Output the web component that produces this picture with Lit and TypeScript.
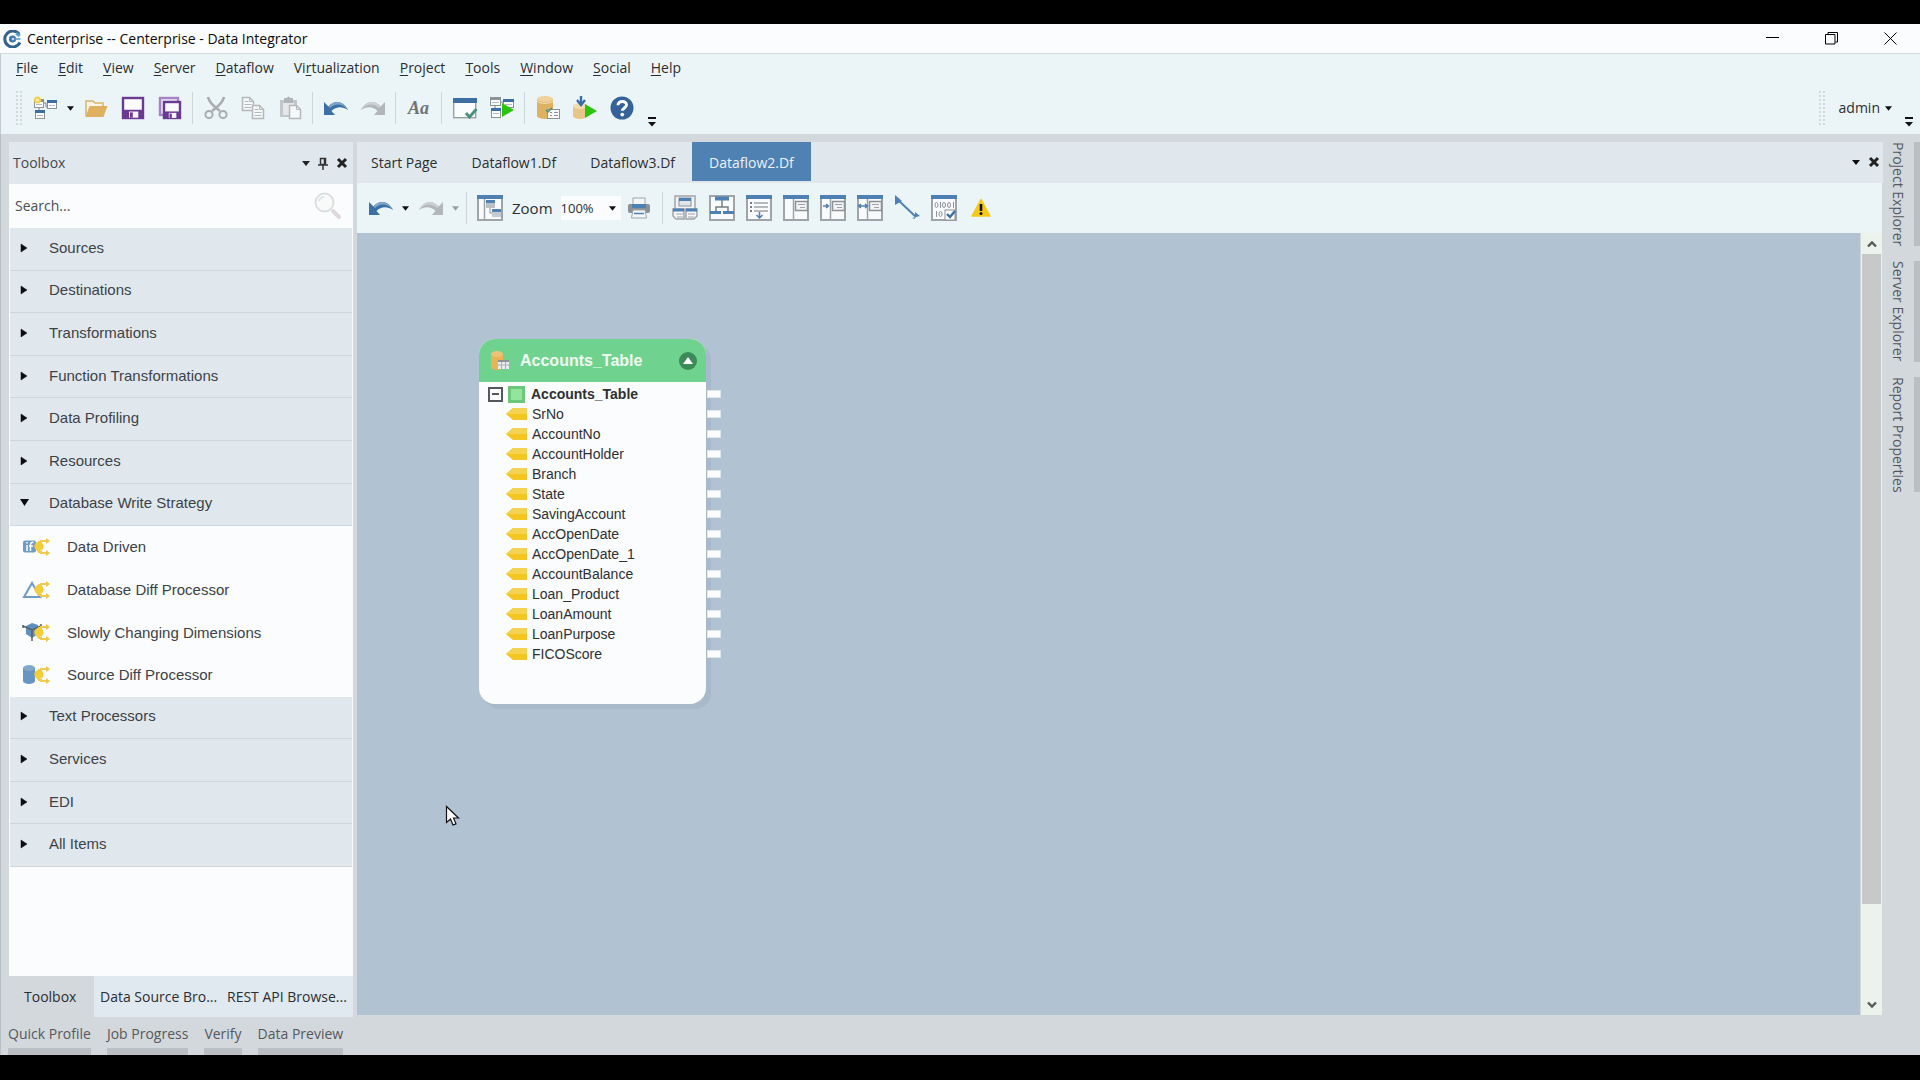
import { LitElement, html, svg, css, nothing } from "lit";
import { customElement, state } from "lit/decorators.js";
import { classMap } from "lit/directives/class-map.js";

/* ---------- icons ---------- */

const icon = (w: number, h: number, body: unknown) => html`<svg
  class="icon" width=${w} height=${h} viewBox="0 0 ${w} ${h}" fill="none" aria-hidden="true">${body}</svg>`;

const caret = (color = "#111", w = 8) => html`<svg class="icon" width=${w} height="5" viewBox="0 0 8 5" aria-hidden="true">
  <path d="M0 0h8L4 5z" fill=${color} /></svg>`;

const overflow = icon(8, 10, svg`<path d="M0 1h8" stroke="#111" stroke-width="2"/><path d="M0 5h8L4 9.5z" fill="#111"/>`);

const logo = icon(18, 18, svg`
  <path d="M16.2 4.2A8 8 0 1 0 17 12.500" stroke="#33628f" stroke-width="3"/>
  <path d="M13 3.500a6.600 6.600 0 0 1 3.600 2.500" stroke="#5c9bc9" stroke-width="3"/>
  <circle cx="9.500" cy="9" r="3.600" fill="#3f78a8"/><circle cx="10" cy="9" r="1.300" fill="#b9d6ea"/>
  <path d="M12.500 9h5" stroke="#7fb0d5" stroke-width="2"/>`);

const miniWin = (x: number, y: number, w = 9, h = 8, bar = "#3c6ea3") => svg`
  <rect x=${x + 0.5} y=${y + 0.5} width=${w} height=${h} fill="#fbfcfd" stroke="#8c9298"/>
  <rect x=${x} y=${y} width=${w + 1} height="3" fill=${bar}/>
  <path d="M${x + 2} ${y + 5.5}h${w - 3}" stroke="#b5babf"/>`;

const newFlow = icon(24, 24, svg`
  <path d="M9 7h4v4h3M6 11v5" stroke="#7d848a"/>
  ${miniWin(1, 3, 9, 8, "#8c9298")}${miniWin(14, 4)}${miniWin(2, 14, 9, 8)}
  <circle cx="4.500" cy="4" r="3.500" fill="#f3cf4a"/><circle cx="4.500" cy="4" r="1.500" fill="#fdf3b9"/>`);

const open = icon(24, 24, svg`
  <path d="M2 20V5h7l2 2h8v4" stroke="#d9b26c" stroke-width="1.500" fill="#fbf4e4"/>
  <path d="M1.500 21 5.500 10H23.500L19.500 21z" fill="#dfb060"/>`);

const disk = (x: number, y: number, s: number) => svg`
  <rect x=${x + 1} y=${y + 1} width=${s - 2} height=${s - 2} fill="#fbfaff" stroke="#6a3a93" stroke-width="2.400"/>
  <rect x=${x + 2} y=${y + s * 0.58} width=${s - 4} height=${s * 0.36} fill="#6a3a93"/>
  <rect x=${x + s * 0.32} y=${y + s * 0.66} width=${s * 0.42} height=${s * 0.28} fill="#f7f3fb"/>
  <rect x=${x + s * 0.36} y=${y + s * 0.7} width=${s * 0.13} height=${s * 0.24} fill="#6a3a93"/>`;
const save = icon(24, 24, disk(1, 1, 22));
const saveAll = icon(24, 24, svg`<rect x="2" y="2" width="18" height="17" fill="#eee5f6" stroke="#a583c4" stroke-width="2.400"/>${disk(5, 5, 18)}`);

const cut = icon(24, 24, svg`
  <path d="M4 1c1 5 5 9 12 14M20 1c-1 5-5 9-12 14" stroke="#a9adb1" stroke-width="2.600"/>
  <circle cx="5" cy="18.500" r="3.600" stroke="#a9adb1" stroke-width="2"/><circle cx="19" cy="18.500" r="3.600" stroke="#a9adb1" stroke-width="2"/>`);

const page = (x: number, y: number, lines = true) => svg`
  <path d="M${x} ${y}h7l4 4v9h-11z" fill="#f5f8f9" stroke="#b4b8bb" stroke-width="1.500"/>
  <path d="M${x + 7} ${y}v4h4" stroke="#b4b8bb"/>
  ${lines ? svg`<path d="M${x + 2} ${y + 4}h4M${x + 2} ${y + 7}h7M${x + 2} ${y + 10}h7" stroke="#b4b8bb"/>` : nothing}`;
const copy = icon(24, 24, svg`${page(1.5, 1.5)}${page(11.5, 9.5)}`);
const paste = icon(24, 24, svg`
  <rect x="2" y="4" width="17" height="17" fill="#c3c7ca"/><rect x="5" y="7" width="11" height="12" fill="#e4e8ea"/>
  <rect x="6" y="2" width="9" height="5" fill="#b1b5b8"/><circle cx="10.500" cy="2" r="1.500" fill="#b1b5b8"/>${page(11.5, 9.5, false)}`);

const undo = icon(26, 16, svg`
  <path d="M1 2v13h11l-3.500-4C13 6.500 19 6 25 10 21 1 11-1 5.500 6.500z" fill="#3c70a5"/>
  <path d="M5.500 6.500C11-1 21 1 25 10 19 3 12 3 7 8z" fill="#7fa5c8"/>`);
const redo = icon(26, 16, svg`
  <path d="M25 2v13H14l3.500-4C13 6.500 7 6 1 10 5 1 15-1 20.500 6.500z" fill="#b3b7ba"/>
  <path d="M20.500 6.500C15-1 5 1 1 10 7 3 14 3 19 8z" fill="#cdd1d4"/>`);

const check = (x: number, y: number, c = "#4b9078") => svg`<path d="M${x} ${y}l3.500 4 7-8" stroke=${c} stroke-width="2.800"/>`;
const verifyWin = icon(26, 24, svg`
  <rect x="1.700" y="2.700" width="22" height="19" fill="#fafcfd" stroke="#9aa0a5" stroke-width="1.400"/>
  <rect x="1" y="2" width="24" height="5" fill="#3c6ea3"/>${check(14, 17)}`);
const play = (x: number, y: number) => svg`<path d="M${x} ${y}l12 7-12 7z" fill="#2bc40d"/>`;
const runFlow = icon(26, 24, svg`
  <path d="M9 6h6M6 9v5" stroke="#7d848a"/>
  ${miniWin(1, 1, 10, 8, "#8c9298")}${miniWin(14, 3, 10, 8)}${miniWin(2, 12, 9, 9)}${play(13, 7)}`);

const drum = (x: number, y: number, w: number, h: number, fill: string, top: string) => svg`
  <path d="M${x} ${y + 3}v${h - 6}a${w / 2} 3 0 0 0 ${w} 0V${y + 3}z" fill=${fill}/>
  <ellipse cx=${x + w / 2} cy=${y + 3} rx=${w / 2} ry="3" fill=${top}/>`;
const dbTable = icon(24, 24, svg`
  ${drum(1, 0, 16, 23, "#dfb263", "#efd29b")}<path d="M1 5c3 3 13 3 16 0" stroke="#f6e6c4"/>
  <rect x="11.500" y="13.500" width="12" height="9" fill="#f5f7f8" stroke="#8c9298"/>
  <path d="M14 16.500h2M18 16.500h4M14 19.500h2M18 19.500h4" stroke="#8c9298"/><path d="M10 14l2 2 4-4" stroke="#4b9078" stroke-width="1.500"/>`);
const dbRun = icon(26, 24, svg`
  ${drum(1, 7, 14, 16, "#e8c58a", "#f2dcb2")}
  <path d="M9 0v7M5 4l4 5 4-5" stroke="#3c6ea3" stroke-width="2.400"/>${play(13, 8)}`);
const help = icon(24, 24, svg`
  <circle cx="12" cy="12" r="11.500" fill="#346299"/>
  <path d="M8 9.200c0-5 8.500-5 8.500-.4 0 3.200-4.200 3-4.200 6" stroke="#fff" stroke-width="3"/><circle cx="12.300" cy="18.600" r="1.900" fill="#fff"/>`);

/* Dataflow toolbar */
const frame = svg`<rect x="1" y="1" width="24" height="24" fill="#f8fafb" stroke="#a0a4a8" stroke-width="2"/>`;
const topBar = svg`<rect x="0" y="0" width="26" height="4" fill="#4f80b3"/>`;
const layoutIcon = icon(26, 26, svg`${frame}${topBar}<path d="M7.500 4v21" stroke="#a0a4a8" stroke-width="1.500"/>
  <rect x="9" y="5" width="9" height="8" fill="#b9bfc5"/><rect x="9" y="5" width="9" height="3" fill="#4f80b3"/>
  <rect x="15" y="14" width="9" height="8" fill="#c5cad0"/><rect x="15" y="14" width="9" height="3" fill="#4f80b3"/><path d="M13 13v5h2" stroke="#8c9298"/>`);
const printer = icon(24, 22, svg`
  <rect x="6" y="1" width="12" height="7" fill="#f3f6f8" stroke="#a0a5aa"/><rect x="1" y="7" width="22" height="9" rx="2" fill="#8b9197"/>
  <rect x="5" y="7" width="14" height="4" fill="#4f80b3"/><path d="M6 13h12l1.500 8h-15z" fill="#f3f6f8" stroke="#a0a5aa"/><path d="M7 16.500h10" stroke="#4f80b3" stroke-width="1.500"/>`);
const expandAll = icon(26, 26, svg`
  <rect x="3" y="1" width="20" height="14" fill="#f1f3f5" stroke="#a0a4a8" stroke-width="1.500"/>
  <rect x="7" y="3" width="12" height="8" fill="#dfe5ea" stroke="#8c9298"/><rect x="7" y="3" width="12" height="3" fill="#4f80b3"/>
  <path d="M1 14h11v10H4l-3-3zM14 14h11v7l-3 3h-8z" fill="#f5f7f8" stroke="#a0a4a8" stroke-width="1.500"/>
  <path d="M1 15h11M14 15h11" stroke="#4f80b3" stroke-width="3"/><path d="M4 19h7M5 22h6M16 19h7M16 22h6" stroke="#a0a4a8"/>`);
const hierarchy = icon(26, 26, svg`${frame}<path d="M6 3.500h14" stroke="#4f80b3" stroke-width="4"/><path d="M13 5v7M7 16v-4h12v4" stroke="#777d83" stroke-width="1.500"/>
  <path d="M1 17.500h11M14 17.500h11" stroke="#4f80b3" stroke-width="3"/>`);
const listDown = icon(26, 26, svg`${frame}${topBar}<path d="M4 8h2M4 12h2M4 16h2" stroke="#777d83" stroke-width="2"/>
  <path d="M8 8h14M8 12h14M8 16h14" stroke="#a0a4a8" stroke-width="1.500"/><path d="M13.500 17v6M10.500 20l3 3 3-3" stroke="#4f80b3" stroke-width="1.500"/>`);
const sidePane = (arrow: unknown) => icon(26, 26, svg`${frame}${topBar}<path d="M10.500 4v21" stroke="#a0a4a8" stroke-width="1.500"/>
  <rect x="12.500" y="6.500" width="12" height="9" fill="#f1f3f5" stroke="#8c9298" stroke-width="1.500"/><path d="M15 9.500h7M17 12.500h5" stroke="#a0a4a8"/>${arrow}`);
const paneA = sidePane(nothing);
const paneB = sidePane(svg`<path d="M3 11h5M6 9l2.500 2L6 13" stroke="#4f80b3" stroke-width="1.500"/>`);
const paneC = sidePane(svg`<path d="M2 11h8M4 9l-2.500 2L4 13M8 9l2.500 2L8 13" stroke="#4f80b3" stroke-width="1.500"/>`);
const link = icon(26, 26, svg`<path d="M3 4 22 22" stroke="#4f80b3" stroke-width="2"/><path d="M1 0l7 6-7 4zM18 23l8-2-5-4v7z" fill="#4f80b3"/>`);
const dataGrid = icon(26, 26, svg`${frame}${topBar}
  <g stroke="#8c9298"><ellipse cx="5.500" cy="10" rx="1.500" ry="2.500"/><path d="M9.500 7v6"/><ellipse cx="13" cy="10" rx="1.500" ry="2.500"/><ellipse cx="18" cy="10" rx="1.500" ry="2.500"/><path d="M22.500 7v6M5.500 16v6"/><ellipse cx="9.500" cy="19" rx="1.500" ry="2.500"/></g>
  <rect x="14" y="15" width="10" height="10" fill="#fff" stroke="#8c9298"/><path d="M16 19l3 3 5-6" stroke="#3c6ea3" stroke-width="2.400"/>`);
const warning = icon(20, 20, svg`<path d="M10 1.500 19 18H1z" fill="#f6c917" stroke="#f6c917" stroke-width="1.500" stroke-linejoin="round"/>
  <path d="M10 6v7" stroke="#111" stroke-width="2.600"/><circle cx="10" cy="15.500" r="1.500" fill="#111"/>`);

/* Panel chrome */
const cross = icon(12, 12, svg`<path d="M2 2l8 8M10 2l-8 8" stroke="#222" stroke-width="3"/>`);
const pin = icon(10, 13, svg`<path d="M2.500 1.500h5v6h-5zM0 8h10M5 8v5M6.500 1v6" stroke="#333" stroke-width="1.500"/>`);
const magnifier = icon(28, 28, svg`<circle cx="10.500" cy="10.500" r="9" fill="#f7faf9" stroke="#dcdfdf" stroke-width="2"/>
  <path d="M5 9c1-3 3-4 5-4" stroke="#d3e3dc" stroke-width="1.500"/><path d="M19 19l6 6" stroke="#dfd9df" stroke-width="4" stroke-linecap="round"/>`);
const arrowRight = icon(10, 10, svg`<path d="M1 1l6 4-6 4z" fill="#0b0d10" stroke="#0b0d10" stroke-width=".5"/>`);
const arrowDown = icon(10, 10, svg`<path d="M0 1h9L4.500 8z" fill="#0b0d10"/>`);

/* Database write strategy items: a blue shape with a yellow splitter over it */
const splitter = svg`<path d="M13 9l4-4h2V4h5M13 9l4 6h2v1h5" stroke="#f0cb50" stroke-width="2"/><circle cx="17" cy="9.500" r="4.500" fill="#f5cd38"/>
  <path d="M24 1l4 3-4 3zM24 13l4 3-4 3z" fill="#efc64a"/>`;
const itemIcon = (shape: unknown) => icon(28, 20, svg`${shape}${splitter}`);
const dataDriven = itemIcon(svg`<rect x="1" y="3.500" width="13" height="12" rx="2" fill="#6f9bc6"/><path d="M5 8v6M5 5v1.500M8.500 14V8c0-2 1-3 3-2.500M7 9h4" stroke="#fff" stroke-width="1.500"/>`);
const dbDiff = itemIcon(svg`<path d="M2 17 10 3l8 14z" stroke="#6f9bc6" stroke-width="2"/>`);
const scd = itemIcon(svg`<path d="M4 3l6-3 6 2v9l-6 4-6-4z" fill="#5f8fbd"/><path d="M1 3l9 4 9-4M10 7v11M1 2v3M19 1v3" stroke="#59616a" stroke-width="1.500"/>`);
const sourceDiff = itemIcon(drum(1, 0, 12, 19, "#6795c2", "#7fa8cf"));

const tag = icon(21, 14, svg`<path d="M0 7 7 1H21V13H7z" fill="#f3c622"/><path d="M0 7 7 1H21V7z" fill="#f5d251"/>`);
const nodeIcon = icon(20, 20, svg`${drum(1, 0, 12, 19, "#e8b455", "#edc477")}
  <rect x="8" y="9" width="11" height="9" fill="#e9ecef"/><path d="M8 10h11" stroke="#8d9499" stroke-width="2"/><path d="M8 14h11M11.500 11v7M15.500 11v7" stroke="#aab1b6"/>`);
const collapse = icon(18, 18, svg`<circle cx="9" cy="9" r="9" fill="#3b8a57"/><path d="M4 12h10L9 5z" fill="#fff"/>`);

/* ---------- data ---------- */

const MENUS: [string, string, string][] = [
  ["", "F", "ile"], ["", "E", "dit"], ["", "V", "iew"], ["", "S", "erver"], ["", "D", "ataflow"],
  ["Vi", "r", "tualization"], ["", "P", "roject"], ["", "T", "ools"], ["", "W", "indow"], ["", "S", "ocial"], ["", "H", "elp"],
];
const CATEGORIES = ["Sources", "Destinations", "Transformations", "Function Transformations", "Data Profiling", "Resources",
  "Database Write Strategy", "Text Processors", "Services", "EDI", "All Items"];
const STRATEGIES: [string, unknown][] = [
  ["Data Driven", dataDriven], ["Database Diff Processor", dbDiff],
  ["Slowly Changing Dimensions", scd], ["Source Diff Processor", sourceDiff],
];
const FIELDS = ["SrNo", "AccountNo", "AccountHolder", "Branch", "State", "SavingAccount", "AccOpenDate", "AccOpenDate_1",
  "AccountBalance", "Loan_Product", "LoanAmount", "LoanPurpose", "FICOScore"];
const DOCUMENTS = ["Start Page", "Dataflow1.Df", "Dataflow3.Df", "Dataflow2.Df"];

const tool = (label: string, glyph: unknown, size = "") => html`<button class="tool ${size}" aria-label=${label}>${glyph}</button>`;
const sep = html`<span class="sep"></span>`;

@customElement("app-root")
export class AppRoot extends LitElement {
  static styles = css`
    :host {
      display: flex; flex-direction: column; box-sizing: border-box; min-height: 100vh;
      padding: 24px 0 25px; background: #000; color: #2b2e31;
      font: 14px/20px "Open Sans", "Noto Sans", sans-serif;
    }
    *, *::before { box-sizing: border-box; }
    button, input, select { font: inherit; color: inherit; border: 0; padding: 0; margin: 0; background: none; border-radius: 0; }
    button { display: flex; align-items: center; white-space: nowrap; }
    .icon { display: block; flex: none; }

    .titlebar { display: flex; align-items: center; height: 30px; padding-left: 3px; background: #fbfcfd; border-bottom: 1px solid #d5dade; color: #0c0c0c; }
    .titlebar .caption { flex: 1; margin-left: 6px; }
    .winbtn { width: 59px; height: 29px; justify-content: center; }

    .head { background: #ebf5f8; border-left: 1px solid #c3c9ce; }
    .menubar { display: flex; gap: 20px; height: 28px; padding: 0 15px; align-items: center; }
    .menubar u { text-underline-offset: 2px; }
    .toolbar { display: flex; align-items: center; height: 52px; padding: 0 4px 0 15px; }
    .grip { width: 7px; height: 34px; margin-right: 3px; background: radial-gradient(circle at 1px 1px, #d3d9dc 1px, transparent 1px) 0 0 / 4px 4px; }
    .tool { width: 37px; height: 34px; justify-content: center; flex: none; }
    .tool.low { width: 24px; height: 38px; align-items: flex-end; }
    .tool.drop { width: 14px; }
    .tool.tight { width: 13px; }
    .sep { width: 1px; height: 32px; margin: 0 4px; background: #cfd6da; flex: none; }
    .aa { font: italic bold 18px/24px "Liberation Serif", serif; color: #6e7377; }
    .spacer { flex: 1; }
    .user { gap: 5px; margin: 0 10px; }

    .work { flex: 1; display: flex; background: #d3d8dc; border-left: 1px solid #b9bfc4; padding-top: 8px; min-height: 0; }

    .toolbox { display: flex; flex-direction: column; width: 344px; margin-left: 8px; flex: none; }
    .panelhead { display: flex; align-items: center; gap: 8px; height: 42px; padding: 0 5px 0 4px; background: #e0e8ee; color: #45494d; }
    .panelhead .name { flex: 1; }
    .search { display: flex; align-items: center; height: 44px; padding: 0 11px 0 6px; background: #fafcfd; }
    .search input { flex: 1; min-width: 0; outline: 0; }
    .search input::placeholder { color: #4b4f53; opacity: 1; }
    .palette { flex: 1; padding: 0 1px; background: #fafcfd; font: 15px/20px "Liberation Sans", Arial, sans-serif; color: #3d4247; }
    .rows { display: grid; grid-auto-rows: 1fr; height: 639px; }
    .category { gap: 19px; padding: 0 10px 2px; background: #e0e8ee; border-bottom: 1px solid #cfd6dc; width: 100%; }
    .entry { gap: 17px; padding: 0 12px; width: 100%; }
    .paneltabs { display: grid; grid-template-columns: 85px 127px 1fr; height: 41px; background: #e0e9ef; }
    .paneltabs button { justify-content: flex-start; padding-left: 6px; }
    .paneltabs .current { background: #d3d8dc; padding-left: 15px; }

    .editor { flex: 1; display: flex; flex-direction: column; min-width: 0; margin: 0 0 2px 4px; }
    .doctabs { display: flex; align-items: flex-start; height: 41px; padding-right: 3px; background: #e0e8ee; }
    .doctabs button.doc { height: 39px; padding: 2px 17px 0; }
    .doctabs button.doc.first { padding-left: 14px; }
    .doctabs button.doc.active { background: #4f81b2; color: #eaf2f9; }
    .doctabs .tail { display: flex; align-items: center; gap: 8px; height: 40px; }
    .flowbar { display: flex; align-items: center; height: 50px; padding-left: 5px; margin-right: 1px; background: #ebf5f8; }
    .flowbar label { font-size: 15px; margin: 0 8px 0 4px; }
    .zoom { display: grid; width: 60px; height: 24px; background: #fafcfd; align-items: center; }
    .zoom select { grid-area: 1 / 1; appearance: none; width: 60px; height: 24px; font-size: 13px; }
    .zoom svg { grid-area: 1 / 1; justify-self: end; margin-right: 5px; pointer-events: none; }

    .stage { flex: 1; display: flex; min-height: 0; margin-right: 1px; }
    .canvas { flex: 1; position: relative; overflow: hidden; background: #b1c3d2; }
    .scroll { display: flex; flex-direction: column; width: 21px; padding: 0 1px; margin-left: 1px; background: #ebf3ec; }
    .scroll button { height: 21px; justify-content: center; flex: none; }
    .scroll .thumb { flex: 65; background: #c6c9c8; }
    .scroll .rest { flex: 9; }

    .node { position: absolute; left: 122px; top: 106px; width: 227px; padding-bottom: 40px; border-radius: 16px; background: #fafcfd; box-shadow: 5px 5px 0 #a9b9cc;
      font: 14px/20px "Liberation Sans", Arial, sans-serif; color: #2e3033; }
    .nodehead { display: flex; align-items: center; height: 43px; padding: 1px 9px 0 11px; border-radius: 16px 16px 0 0; background: #6fd38f; color: #effcf1; font-weight: bold; font-size: 16px; }
    .nodehead .name { flex: 1; margin-left: 10px; }
    .fields { margin: 0; padding: 2px 0 0; list-style: none; }
    .fields li { display: flex; align-items: center; gap: 5px; height: 20px; padding-left: 27px; }
    .fields li.root { padding-left: 9px; font-weight: bold; }
    .fields li::after { content: ""; width: 14px; height: 8px; margin: 0 -15px 0 auto; background: #fafcfd; border: 1px solid #e1e5e8; box-sizing: border-box; }
    .minus { width: 15px; height: 15px; border: 2px solid #55595d; justify-content: center; }
    .minus::before { content: ""; width: 7px; height: 2px; background: #55595d; }
    .chip { width: 17px; height: 17px; margin-right: 1px; background: #93e59b; border: 3px solid #6cc878; }
    .pointer { position: absolute; left: 88px; top: 572px; }

    .dock { display: flex; flex-direction: column; gap: 15px; width: 37px; flex: none; }
    .dock button { writing-mode: vertical-rl; width: 37px; border-right: 6px solid #b9bfc2; color: #55595d; justify-content: flex-start; }
    .dock button span { width: 31px; line-height: 31px; }

    .status { display: flex; gap: 16px; height: 38px; padding-left: 7px; background: #d3d8dc; border-left: 1px solid #b9bfc4; color: #55595d; align-items: flex-end; }
    .status button { height: 34px; padding-bottom: 1px; border-bottom: 7px solid #b9bfc2; }
  `;

  @state() private expanded = "Database Write Strategy";
  @state() private doc = "Dataflow2.Df";

  private renderCategory(name: string) {
    const isOpen = name === this.expanded;
    return html`<button class="category" aria-expanded=${isOpen} @click=${() => (this.expanded = name)}>
        ${isOpen ? arrowDown : arrowRight}<span>${name}</span></button>
      ${name === "Database Write Strategy" && isOpen
        ? STRATEGIES.map(([label, glyph]) => html`<button class="entry">${glyph}<span>${label}</span></button>`)
        : nothing}`;
  }

  render() {
    return html`
      <header class="titlebar">
        ${logo}<span class="caption">Centerprise -- Centerprise - Data Integrator</span>
        <button class="winbtn" aria-label="Minimize">${icon(13, 13, svg`<path d="M0 5.500h13" stroke="#000"/>`)}</button>
        <button class="winbtn" aria-label="Restore">${icon(13, 13, svg`<path d="M.5 2.500h9.500v9.500H.5zM3 2.500v-2h9.500V10h-2" stroke="#000"/>`)}</button>
        <button class="winbtn" aria-label="Close">${icon(13, 13, svg`<path d="M.5.5l12 12M12.500.5l-12 12" stroke="#000"/>`)}</button>
      </header>

      <div class="head">
        <nav class="menubar">
          ${MENUS.map(([pre, key, post]) => html`<button><span>${pre}<u>${key}</u>${post}</span></button>`)}
        </nav>
        <div class="toolbar">
          <span class="grip"></span>
          ${tool("New", newFlow)}${tool("New options", caret("#111", 7), "drop")}${tool("Open", open)}${tool("Save", save)}${tool("Save all", saveAll)}${sep}
          ${tool("Cut", cut)}${tool("Copy", copy)}${tool("Paste", paste)}${sep}${tool("Undo", undo)}${tool("Redo", redo)}${sep}
          <button class="tool aa">Aa</button>${sep}
          ${tool("Verify", verifyWin)}${tool("Run dataflow", runFlow)}${sep}${tool("Database table", dbTable)}${tool("Run on database", dbRun)}${tool("Help", help)}
          ${tool("Toolbar options", overflow, "low")}
          <span class="spacer"></span>
          <span class="grip"></span>
          <button class="user">admin ${caret("#111", 7)}</button>
          ${tool("User bar options", overflow, "low drop")}
        </div>
      </div>

      <div class="work">
        <aside class="toolbox">
          <div class="panelhead"><span class="name">Toolbox</span>
            <button aria-label="Panel menu">${caret("#222")}</button>
            <button aria-label="Pin">${pin}</button>
            <button aria-label="Close panel">${cross}</button>
          </div>
          <div class="search"><input type="text" aria-label="Search" placeholder="Search..." />${magnifier}</div>
          <div class="palette"><div class="rows">${CATEGORIES.map((c) => this.renderCategory(c))}</div></div>
          <div class="paneltabs">
            <button class="current">Toolbox</button><button>Data Source Bro...</button><button>REST API Browse...</button>
          </div>
        </aside>

        <main class="editor">
          <div class="doctabs" role="tablist">
            ${DOCUMENTS.map((d, i) => html`<button role="tab" aria-selected=${d === this.doc}
              class=${classMap({ doc: true, first: i === 0, active: d === this.doc })} @click=${() => (this.doc = d)}>${d}</button>`)}
            <span class="spacer"></span>
            <span class="tail"><button aria-label="Documents">${caret()}</button><button aria-label="Close document">${cross}</button></span>
          </div>
          <div class="flowbar">
            ${tool("Undo", undo)}${tool("Undo history", caret("#111", 7), "tight")}${tool("Redo", redo)}${tool("Redo history", caret("#9a9fa3", 7), "tight")}${sep}
            ${tool("Auto layout", layoutIcon)}
            <label for="zoom">Zoom</label>
            <span class="zoom"><select id="zoom"><option>100%</option></select>${caret("#111", 7)}</span>
            ${tool("Print", printer)}${sep}
            ${tool("Expand all", expandAll)}${tool("Hierarchy", hierarchy)}${tool("List", listDown)}
            ${tool("Pane", paneA)}${tool("Expand pane", paneB)}${tool("Resize pane", paneC)}
            ${tool("Link", link)}${tool("Preview data", dataGrid)}${tool("Warnings", warning)}
          </div>
          <div class="stage">
            <div class="canvas">
              <section class="node">
                <div class="nodehead">${nodeIcon}<span class="name">Accounts_Table</span>
                  <button aria-label="Collapse">${collapse}</button></div>
                <ul class="fields">
                  <li class="root"><button class="minus" aria-label="Collapse fields"></button><span class="chip"></span><span>Accounts_Table</span></li>
                  ${FIELDS.map((f) => html`<li>${tag}<span>${f}</span></li>`)}
                </ul>
              </section>
              <svg class="pointer" width="15" height="22" viewBox="0 0 15 22" aria-hidden="true">
                <path d="M1.500 1.500v16l4-3.500 2.500 6 3-1.200-2.500-5.800h5z" fill="#fff" stroke="#111" stroke-width="1.200" /></svg>
            </div>
            <div class="scroll">
              <button aria-label="Scroll up">${icon(10, 8, svg`<path d="M1 6.500l4-4 4 4" stroke="#555a58" stroke-width="2.400"/>`)}</button>
              <span class="thumb"></span><span class="rest"></span>
              <button aria-label="Scroll down">${icon(10, 8, svg`<path d="M1 1.500l4 4 4-4" stroke="#555a58" stroke-width="2.400"/>`)}</button>
            </div>
          </div>
        </main>

        <aside class="dock">
          ${["Project Explorer", "Server Explorer", "Report Properties"].map((t) => html`<button><span>${t}</span></button>`)}
        </aside>
      </div>

      <footer class="status">
        ${["Quick Profile", "Job Progress", "Verify", "Data Preview"].map((t) => html`<button>${t}</button>`)}
      </footer>
    `;
  }
}
